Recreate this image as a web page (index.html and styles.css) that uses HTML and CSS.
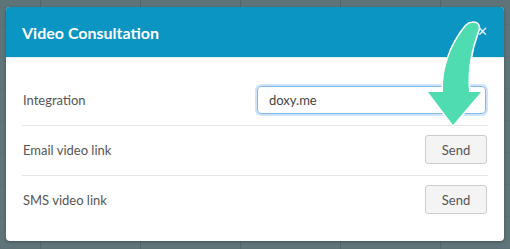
FILE: index.html
```html
<!DOCTYPE html>
<html>
<head>
<meta charset="utf-8">
<link rel="stylesheet" href="styles.css">
</head>
<body>
<div class="modal">
  <div class="modal-header">
    <h4 class="modal-title">Video Consultation</h4>
    <span class="close">&#x2715;</span>
  </div>
  <div class="modal-body">
    <div class="row">
      <span class="label">Integration</span>
      <div class="input">doxy.me</div>
    </div>
    <div class="row">
      <span class="label">Email video link</span>
      <button class="btn">Send</button>
    </div>
    <div class="row">
      <span class="label">SMS video link</span>
      <button class="btn">Send</button>
    </div>
  </div>
</div>
<svg class="arrow" width="510" height="249" viewBox="0 0 510 249">
  <path d="M472 23 C478 22 480 27 478 31 C471 50 467 70 469 92 L481 92 L453 125 L428 92 L443 92 C442 70 450 45 466 26 C468 24 470 23 472 23 Z" fill="#4edcb0" stroke="#ffffff" stroke-width="3" stroke-linejoin="round" paint-order="stroke"/>
</svg>
</body>
</html>
```
FILE: styles.css
```css
html, body {
  margin: 0;
  padding: 0;
}
body {
  width: 510px;
  height: 249px;
  overflow: hidden;
  position: relative;
  font-family: Lato, "Open Sans", sans-serif;
  background-color: #5e7478;
  background-image:
    repeating-linear-gradient(to right, transparent 0, transparent 40px, #51676b 40px, #51676b 41px, transparent 41px, transparent 100px),
    repeating-linear-gradient(to bottom, transparent 0, transparent 24px, #5b7175 24px, #5b7175 25px, transparent 25px, transparent 32px);
  padding: 7px 6px 0 6px;
  box-sizing: border-box;
}
.modal {
  width: 498px;
  height: 234px;
  background: #fff;
  border-radius: 4px;
  overflow: hidden;
  box-shadow: 0 1px 3px rgba(0,0,0,0.3);
  display: flex;
  flex-direction: column;
}
.modal-header {
  height: 51px;
  background: #0a95c3;
  border-bottom: 1px solid #e6eef2;
  box-sizing: border-box;
  display: flex;
  align-items: center;
  justify-content: space-between;
  padding: 0 16px 0 16px;
}
.modal-title {
  margin: 0;
  color: #fff;
  font-size: 16px;
  font-weight: 700;
}
.close {
  color: #fff;
  font-size: 13px;
  font-family: "DejaVu Sans", sans-serif;
  opacity: 0.9;
  margin-top: -2px;
}
.modal-body {
  padding: 27px 16px 0 16px;
}
.row {
  display: flex;
  align-items: center;
  justify-content: space-between;
  padding: 9px 0 11px 0;
  border-top: 1px solid #e5e5e5;
  height: 29px;
}
.row:first-child {
  border-top: none;
  padding-top: 0;
}
.label {
  color: #555;
  font-size: 13px;
  padding-left: 1px;
}
.input {
  width: 229px;
  height: 28px;
  box-sizing: border-box;
  border: 1px solid #7fb8ec;
  border-radius: 4px;
  box-shadow: 0 0 0 2px #cfe3fa;
  padding: 0 11px;
  font-size: 13px;
  color: #444;
  display: flex;
  align-items: center;
  margin-right: 2px;
}
.btn {
  width: 62px;
  height: 29px;
  box-sizing: border-box;
  background: #f4f4f4;
  border: 1px solid #ccc;
  border-radius: 3px;
  font-family: Lato, sans-serif;
  font-size: 13px;
  color: #555;
  padding: 0;
  margin-right: 1px;
}
.arrow {
  position: absolute;
  left: 0;
  top: 0;
}
```
